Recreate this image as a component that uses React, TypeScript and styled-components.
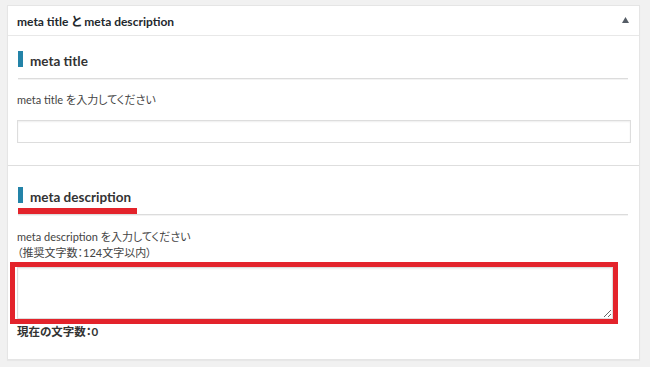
import React from 'react';
import styled, { createGlobalStyle, css } from 'styled-components';

const GlobalStyle = createGlobalStyle`
  html, body {
    margin: 0;
    padding: 0;
    background: #f1f1f1;
  }
  body {
    font-family: 'Lato', 'Noto Sans CJK JP', sans-serif;
    font-feature-settings: 'palt';
    color: #444;
  }
`;

const Page = styled.div`
  padding: 5px 10px 8px 7px;
`;

const Panel = styled.div`
  width: 631px;
  background: #fff;
  border: 1px solid #e5e5e5;
  box-shadow: 0 1px 1px rgba(0, 0, 0, 0.04);
`;

const PanelHeader = styled.div`
  height: 29px;
  display: flex;
  align-items: center;
  justify-content: space-between;
  padding: 0 10px 0 9px;
  border-bottom: 1px solid #e8e8e8;
`;

const PanelTitle = styled.h2`
  margin: 0;
  font-size: 12px;
  font-weight: 700;
  color: #23282d;
`;

const ToggleArrow = styled.svg`
  width: 7px;
  height: 6px;
  fill: #555d66;
  margin-top: -2px;
`;

const Section = styled.div<{ $top: number; $bottom: number; $divider?: boolean }>`
  padding: ${({ $top }) => $top}px 8px ${({ $bottom }) => $bottom}px 9px;
  ${({ $divider }) =>
    $divider &&
    css`
      border-bottom: 1px solid #dedede;
    `}
`;

const HeadingRow = styled.div`
  display: flex;
  margin: 0 3px 0 1px;
  border-bottom: 1px solid #dcdcdc;
  box-shadow: 0 1px 0 #f3f3f3;
`;

const Heading = styled.h3<{ $marked?: boolean }>`
  display: flex;
  align-items: flex-end;
  margin: 0;
  padding: 0 6px 5px 0;
  border-bottom: 6px solid ${({ $marked }) => ($marked ? '#e3232b' : 'transparent')};
  font-size: 13.5px;
  font-weight: 700;
  color: #333;
  line-height: 16px;
`;

const HeadingBar = styled.span`
  width: 5px;
  height: 16px;
  margin-right: 7px;
  background: #2383a8;
`;

const HeadingText = styled.span`
  line-height: 14px;
  margin-bottom: -1px;
`;

const Hint = styled.p<{ $gap: number }>`
  margin: ${({ $gap }) => $gap}px 0 0;
  font-size: 11px;
  line-height: 16px;
  color: #444;
`;

const TextInput = styled.input`
  display: block;
  box-sizing: border-box;
  width: 614px;
  height: 23px;
  margin-top: 12px;
  border: 1px solid #dddddd;
  box-shadow: inset 0 1px 2px rgba(0, 0, 0, 0.07);
  background: #fff;
  outline: none;
`;

const Marker = styled.div`
  box-sizing: border-box;
  width: 608px;
  margin: 1px 0 0 -7px;
  padding: 0 0 0 2px;
  border: 5px solid #e3232b;
`;

const TextArea = styled.textarea`
  display: block;
  box-sizing: border-box;
  width: 596px;
  height: 52px;
  margin: 0;
  border: 1px solid #dddddd;
  box-shadow: inset 0 1px 2px rgba(0, 0, 0, 0.07);
  background: #fff;
  outline: none;
  resize: both;
`;

const Counter = styled.p`
  margin: 0;
  font-size: 11.5px;
  font-weight: 700;
  line-height: 16px;
  color: #333;
`;

export default function App() {
  return (
    <>
      <GlobalStyle />
      <Page>
        <Panel>
          <PanelHeader>
            <PanelTitle>meta title と meta description</PanelTitle>
            <ToggleArrow viewBox="0 0 7 6">
              <polygon points="3.5,0 7,6 0,6" />
            </ToggleArrow>
          </PanelHeader>

          <Section $top={15} $bottom={22} $divider>
            <HeadingRow>
              <Heading>
                <HeadingBar />
                <HeadingText>meta title</HeadingText>
              </Heading>
            </HeadingRow>
            <Hint $gap={13}>meta title を入力してください</Hint>
            <TextInput type="text" />
          </Section>

          <Section $top={21} $bottom={19}>
            <HeadingRow>
              <Heading $marked>
                <HeadingBar />
                <HeadingText>meta description</HeadingText>
              </Heading>
            </HeadingRow>
            <Hint $gap={14}>
              meta description を入力してください
              <br />
              （推奨文字数：124文字以内）
            </Hint>
            <Marker>
              <TextArea />
            </Marker>
            <Counter>現在の文字数：0</Counter>
          </Section>
        </Panel>
      </Page>
    </>
  );
}
